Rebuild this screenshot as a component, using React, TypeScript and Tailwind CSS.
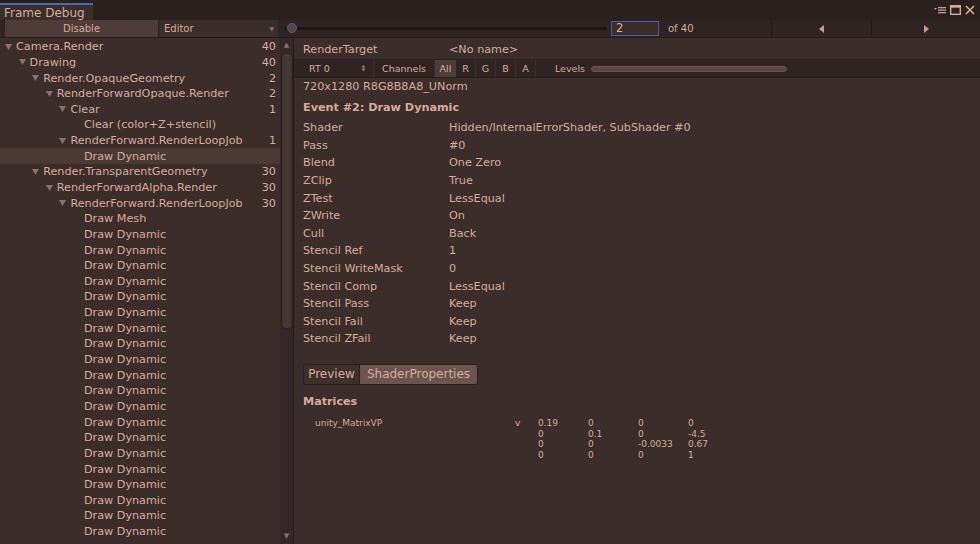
import React from 'react';

type Node = { label: string; depth: number; count?: number; open?: boolean; selected?: boolean };

const tree: Node[] = [
  { label: 'Camera.Render', depth: 0, count: 40, open: true },
  { label: 'Drawing', depth: 1, count: 40, open: true },
  { label: 'Render.OpaqueGeometry', depth: 2, count: 2, open: true },
  { label: 'RenderForwardOpaque.Render', depth: 3, count: 2, open: true },
  { label: 'Clear', depth: 4, count: 1, open: true },
  { label: 'Clear (color+Z+stencil)', depth: 5 },
  { label: 'RenderForward.RenderLoopJob', depth: 4, count: 1, open: true },
  { label: 'Draw Dynamic', depth: 5, selected: true },
  { label: 'Render.TransparentGeometry', depth: 2, count: 30, open: true },
  { label: 'RenderForwardAlpha.Render', depth: 3, count: 30, open: true },
  { label: 'RenderForward.RenderLoopJob', depth: 4, count: 30, open: true },
  { label: 'Draw Mesh', depth: 5 },
  ...Array.from({ length: 20 }, () => ({ label: 'Draw Dynamic', depth: 5 })),
];

const props: [string, string][] = [
  ['Shader', 'Hidden/InternalErrorShader, SubShader #0'],
  ['Pass', '#0'],
  ['Blend', 'One Zero'],
  ['ZClip', 'True'],
  ['ZTest', 'LessEqual'],
  ['ZWrite', 'On'],
  ['Cull', 'Back'],
  ['Stencil Ref', '1'],
  ['Stencil WriteMask', '0'],
  ['Stencil Comp', 'LessEqual'],
  ['Stencil Pass', 'Keep'],
  ['Stencil Fail', 'Keep'],
  ['Stencil ZFail', 'Keep'],
];

const matrix = [
  ['0.19', '0', '0', '0'],
  ['0', '0.1', '0', '-4.5'],
  ['0', '0', '-0.0033', '0.67'],
  ['0', '0', '0', '1'],
];

const Tri = () => (
  <svg width="7" height="6" viewBox="0 0 7 6" className="shrink-0">
    <path d="M0 0 L7 0 L3.5 6 Z" fill="#8e716a" />
  </svg>
);

export default function App() {
  return (
    <div
      className="w-[980px] h-[544px] overflow-hidden flex flex-col bg-[#3b2d2a] text-[#d8aa9a] text-[11.2px] leading-none"
      style={{ fontFamily: '"DejaVu Sans", Verdana, sans-serif' }}
    >
      {/* title tab row */}
      <div className="h-[20px] bg-[#2a201e] flex items-end shrink-0">
        <div className="h-[17px] w-[93px] bg-[#3b2d2a] border-t-2 border-[#3f6fb4] flex items-center pl-[4px] text-[12px]">
          Frame Debug
        </div>
        <div className="flex-1" />
        <div className="self-center flex items-center gap-[4px] pr-[5px]">
          <svg width="12" height="10" viewBox="0 0 12 10">
            <path d="M0 3 L3 3 L1.5 5 Z" fill="#c79c8d" />
            <rect x="4" y="2" width="8" height="1.3" fill="#c79c8d" />
            <rect x="4" y="4.5" width="8" height="1.3" fill="#c79c8d" />
            <rect x="4" y="7" width="8" height="1.3" fill="#c79c8d" />
          </svg>
          <svg width="11" height="10" viewBox="0 0 11 10">
            <rect x="0.7" y="0.7" width="9.6" height="8.6" fill="none" stroke="#d8aa9a" strokeWidth="1.4" />
            <rect x="0.7" y="0.7" width="9.6" height="2" fill="#d8aa9a" />
          </svg>
          <svg width="10" height="10" viewBox="0 0 10 10">
            <path d="M1 1 L9 9 M9 1 L1 9" stroke="#d8aa9a" strokeWidth="1.6" />
          </svg>
        </div>
      </div>

      {/* toolbar */}
      <div className="h-[18px] bg-[#2f2422] flex items-stretch shrink-0 border-b border-[#241b19] text-[10px]">
        <div className="w-[5px]" />
        <div className="w-[153px] bg-[#4d3c37] flex items-center justify-center">Disable</div>
        <div className="w-[120px] bg-[#3a2d2a] border-l border-[#2a201e] flex items-center pl-[5px] justify-between pr-[4px]">
          <span>Editor</span>
          <span className="text-[6px] text-[#8e716a]">▼</span>
        </div>
        <div className="w-[333px] flex items-center pl-[6px] pr-[4px]">
          <div className="relative w-full h-[3px] bg-[#1f1715] rounded">
            <div className="absolute left-[3px] top-[-4px] w-[10px] h-[10px] rounded-full bg-[#5a463f] border border-[#3c5fb0]" />
          </div>
        </div>
        <div className="w-[48px] my-[1px] border border-[#3c5fb0] bg-[#3b2d2a] flex items-center pl-[4px] text-[11.5px]">2</div>
        <div className="w-[113px] flex items-center pl-[9px] border-r border-[#241b19]">of 40</div>
        <div className="w-[100px] flex items-center justify-center border-r border-[#241b19]">
          <svg width="5" height="8" viewBox="0 0 5 8"><path d="M5 0 L0 4 L5 8 Z" fill="#c79c8d" /></svg>
        </div>
        <div className="flex-1 flex items-center justify-center">
          <svg width="5" height="8" viewBox="0 0 5 8"><path d="M0 0 L5 4 L0 8 Z" fill="#c79c8d" /></svg>
        </div>
      </div>

      <div className="flex flex-1 min-h-0">
        {/* tree */}
        <div className="w-[280px] flex flex-col pt-[1px]">
          {tree.map((n, i) => (
            <div
              key={i}
              className={`h-[15.65px] flex items-center shrink-0 pr-[4px] ${n.selected ? 'bg-[#4a3a36]' : ''}`}
            >
              <div className="flex items-center gap-[4px]" style={{ paddingLeft: 5 + n.depth * 13.6 }}>
                {n.open ? <Tri /> : <div className="w-[7px]" />}
                <span className="whitespace-nowrap">{n.label}</span>
              </div>
              <div className="flex-1" />
              {n.count !== undefined && <span>{n.count}</span>}
            </div>
          ))}
        </div>

        {/* scrollbar */}
        <div className="w-[14px] bg-[#33272a] flex flex-col items-center border-r border-[#231a18]">
          <div className="h-[15px] flex items-center justify-center text-[7px] text-[#8e716a]">▲</div>
          <div className="w-[12px] h-[276px] rounded-[5px] bg-gradient-to-r from-[#3f312d] via-[#4a3b36] to-[#3f312d] border border-[#2b201e]" />
          <div className="flex-1" />
          <div className="h-[16px] flex items-center justify-center text-[7px] text-[#8e716a]">▼</div>
        </div>

        {/* right panel */}
        <div className="flex-1 flex flex-col pl-[9px] pt-[3px]">
          <div className="h-[18px] flex items-center">
            <span className="w-[146px]">RenderTarget</span>
            <span>&lt;No name&gt;</span>
          </div>
          <div className="h-[19px] -ml-[9px] pl-[9px] bg-[#2f2422] border-y border-[#281f1d] flex items-stretch text-[9.5px]">
            <div className="w-[71px] flex items-center justify-between px-[6px] border-r border-[#3c2e2b]">
              <span>RT 0</span>
              <span className="text-[8px] text-[#8e716a]">⬍</span>
            </div>
            <div className="w-[61px] flex items-center justify-center border-r border-[#3c2e2b]">Channels</div>
            <div className="w-[21px] bg-[#4d3c37] flex items-center justify-center">All</div>
            <div className="w-[20px] flex items-center justify-center border-r border-[#3c2e2b]">R</div>
            <div className="w-[20px] flex items-center justify-center border-r border-[#3c2e2b]">G</div>
            <div className="w-[20px] flex items-center justify-center border-r border-[#3c2e2b]">B</div>
            <div className="w-[20px] flex items-center justify-center border-r border-[#3c2e2b]">A</div>
            <div className="w-[55px] flex items-center justify-end pr-[6px]">Levels</div>
            <div className="w-[196px] flex items-center">
              <div className="w-full h-[6px] rounded-full bg-[#5b4741] border border-[#6b554e]" />
            </div>
          </div>
          <div className="h-[18px] flex items-center">720x1280 R8G8B8A8_UNorm</div>
          <div className="h-[23px] flex items-center font-bold">Event #2: Draw Dynamic</div>
          <div className="flex flex-col">
            {props.map(([k, v]) => (
              <div key={k} className="h-[17.6px] flex items-center">
                <span className="w-[146px]">{k}</span>
                <span>{v}</span>
              </div>
            ))}
          </div>
          <div className="mt-[16px] h-[21px] flex w-[175px] rounded-[3px] overflow-hidden border border-[#2a201e] text-[12px]">
            <div className="w-[55px] bg-[#3e302c] flex items-center justify-center">Preview</div>
            <div className="flex-1 bg-[#6b554e] flex items-center justify-center border-l border-[#2a201e]">ShaderProperties</div>
          </div>
          <div className="mt-[9px] h-[15px] flex items-center font-bold">Matrices</div>
          <div className="mt-[10px] flex text-[9px]">
            <span className="w-[212px] pl-[12px]">unity_MatrixVP</span>
            <span className="w-[23px]">v</span>
            <div className="flex flex-col">
              {matrix.map((r, i) => (
                <div key={i} className="h-[10.4px] flex items-center">
                  {r.map((c, j) => (
                    <span key={j} className="w-[50px]">{c}</span>
                  ))}
                </div>
              ))}
            </div>
          </div>
        </div>
      </div>
    </div>
  );
}
